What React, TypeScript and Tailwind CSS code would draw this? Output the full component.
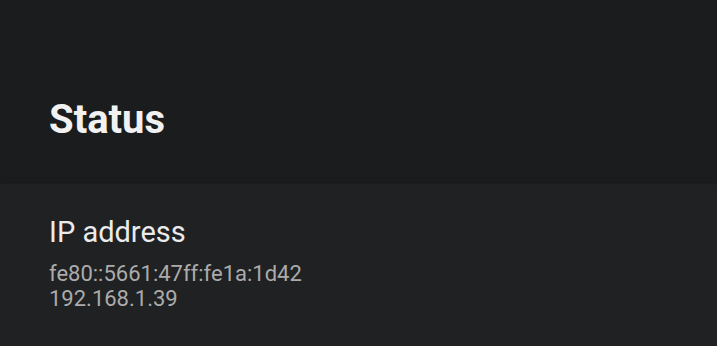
import React from "react";

export default function App() {
  return (
    <div className="w-[717px] h-[346px] flex flex-col bg-[#202123] overflow-hidden" style={{ fontFamily: "Roboto, 'Noto Sans', sans-serif" }}>
      <div className="h-[182px] shrink-0 bg-[#1b1c1e] flex items-end pl-[49px] pb-[42px] shadow-[0_1px_2px_rgba(0,0,0,0.35)] relative z-10">
        <h1 className="text-[40px] font-bold leading-none text-[#f1f1f1]">Status</h1>
      </div>
      <div className="pl-[49px] pt-[33px] flex flex-col">
        <div className="text-[29px] leading-[34px] text-[#ebebeb]">IP address</div>
        <div className="mt-[12px] text-[22px] leading-[25px] text-[#ababab]">
          <div>fe80::5661:47ff:fe1a:1d42</div>
          <div>192.168.1.39</div>
        </div>
      </div>
    </div>
  );
}
